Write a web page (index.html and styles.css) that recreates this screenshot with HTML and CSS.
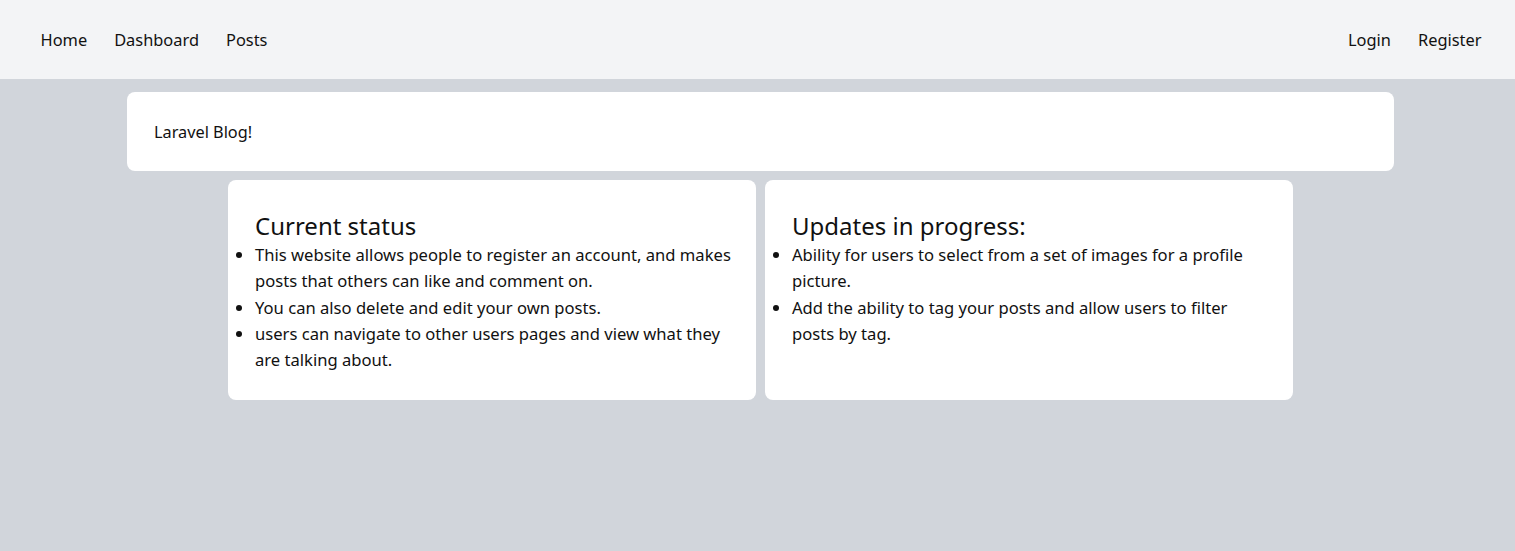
FILE: index.html
```html
<!DOCTYPE html>
<html lang="en">
<head>
<meta charset="utf-8">
<title>Laravel Blog</title>
<link rel="stylesheet" href="styles.css">
</head>
<body>
<nav class="nav">
  <ul class="nav-list">
    <li><a href="#">Home</a></li>
    <li><a href="#">Dashboard</a></li>
    <li><a href="#">Posts</a></li>
  </ul>
  <ul class="nav-list">
    <li><a href="#">Login</a></li>
    <li><a href="#">Register</a></li>
  </ul>
</nav>
<main class="main">
  <div class="hero">Laravel Blog!</div>
  <div class="cards">
    <section class="card">
      <h2 class="card-title">Current status</h2>
      <ul class="card-list">
        <li>This website allows people to register an account, and makes posts that others can like and comment on.</li>
        <li>You can also delete and edit your own posts.</li>
        <li>users can navigate to other users pages and view what they are talking about.</li>
      </ul>
    </section>
    <section class="card">
      <h2 class="card-title">Updates in progress:</h2>
      <ul class="card-list">
        <li>Ability for users to select from a set of images for a profile picture.</li>
        <li>Add the ability to tag your posts and allow users to filter posts by tag.</li>
      </ul>
    </section>
  </div>
</main>
</body>
</html>
```

FILE: styles.css
```css
* { box-sizing: border-box; }
html, body { margin: 0; padding: 0; }
body {
  background: #d1d5db;
  color: #111;
  font-family: "Noto Sans", "Open Sans", sans-serif;
  height: 551px;
  overflow: hidden;
}
a { color: inherit; text-decoration: none; }

.nav {
  height: 79px;
  background: #f3f4f6;
  display: flex;
  justify-content: space-between;
  align-items: center;
  padding: 0 20px 0 27px;
}
.nav-list {
  list-style: none;
  margin: 0;
  padding: 0;
  display: flex;
}
.nav-list li {
  padding: 0 13.5px;
  font-size: 16.4px;
  line-height: 28px;
}

.main {
  width: 1267px;
  margin: 13px 0 0 127px;
}
.hero {
  background: #fff;
  border-radius: 8px;
  height: 79px;
  padding: 0 27px;
  display: flex;
  align-items: center;
  font-size: 16.3px;
}
.cards {
  margin-top: 9px;
  display: flex;
  justify-content: center;
  gap: 9px;
}
.card {
  width: 528px;
  height: 220px;
  background: #fff;
  border-radius: 8px;
  padding: 30px 27px 27px;
}
.card-title {
  margin: 0;
  font-size: 24px;
  font-weight: 400;
  line-height: 32px;
}
.card-list {
  margin: 0 -6px 0 0;
  padding: 0;
  list-style: disc outside;
  font-size: 16.6px;
  line-height: 26.3px;
}
```
